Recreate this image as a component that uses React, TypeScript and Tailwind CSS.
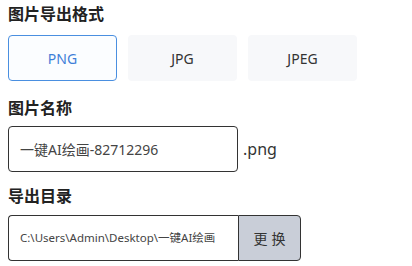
import { useState } from "react";

const formats = ["PNG", "JPG", "JPEG"];

const font = { fontFamily: '"Noto Sans", "Noto Sans CJK SC", sans-serif' };

export default function App() {
  const [format, setFormat] = useState("PNG");

  return (
    <div className="w-[412px] h-[266px] bg-white pl-2 text-[#333]" style={font}>
      <h2 className="pt-[2px] text-[16px] font-bold leading-[24px] text-[#222]">图片导出格式</h2>
      <div className="mt-[9px] flex gap-[11px]">
        {formats.map((f) => (
          <button
            key={f}
            onClick={() => setFormat(f)}
            className={
              f === format
                ? "w-[109px] h-[46px] rounded-[4px] border border-[#4a8fe0] bg-[#fbfdff] text-[14px] text-[#3f7fd8]"
                : "w-[109px] h-[46px] rounded-[4px] border border-transparent bg-[#f7f8fa] text-[14px] text-[#333]"
            }
          >
            {f}
          </button>
        ))}
      </div>
      <h2 className="mt-[15px] text-[16px] font-bold leading-[24px] text-[#222]">图片名称</h2>
      <div className="mt-[6px] flex items-center">
        <div className="w-[230px] h-[46px] rounded-[4px] border border-[#333] flex items-center pl-[11px] text-[14px] text-[#444]">
          一键AI绘画-82712296
        </div>
        <span className="ml-[5px] text-[16px] text-[#333]">.png</span>
      </div>
      <h2 className="mt-[12px] text-[16px] font-bold leading-[24px] text-[#222]">导出目录</h2>
      <div className="mt-[7px] flex">
        <div className="w-[230px] h-[46px] rounded-l-[4px] border border-r-0 border-[#333] flex items-center pl-[11px] text-[11.5px] text-[#444] overflow-hidden whitespace-nowrap">
          C:\Users\Admin\Desktop\一键AI绘画
        </div>
        <button className="w-[63px] h-[46px] rounded-r-[4px] border border-[#333] bg-[#c9ced8] text-[14px] text-[#333] tracking-[4px] pl-[4px]">
          更换
        </button>
      </div>
    </div>
  );
}
